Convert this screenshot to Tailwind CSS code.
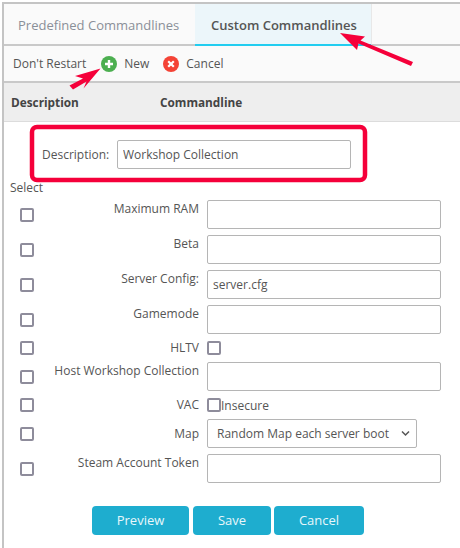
<!DOCTYPE html>
<html lang="en">

<head>
  <meta charset="UTF-8" />
  <title>Custom Commandlines</title>
  <script src="https://cdn.jsdelivr.net/npm/@tailwindcss/browser@4"></script>
</head>

<body class="bg-white">
  <div class="relative w-[460px] h-[548px] overflow-hidden pt-[2px] pl-[2px] font-['Open_Sans',sans-serif] text-[12px] text-[#555]">
    <div class="h-[546px] border-l-2 border-t-2 border-[#c4c4c4] bg-white">
      <!-- tabs -->
      <div class="flex h-[42px] bg-[#fafafa] border-b-2 border-[#c9c9c9]">
        <div class="w-[191px] pl-[14px] pt-[12px] text-[13px] leading-[18px] text-[#8a8f98]">Predefined Commandlines</div>
        <div class="w-[177px] -mb-[2px] h-[42px] bg-[#ecf6fa] border-b-2 border-[#22cdf0] border-r border-r-[#e8e8e8] pl-[16px] pt-[12px] text-[13px] leading-[18px] font-semibold whitespace-nowrap text-[#555]">Custom Commandlines</div>
      </div>
      <!-- toolbar -->
      <div class="flex items-center h-[37px] bg-[#fafafa] border-b-2 border-[#c9c9c9] pl-[9px] pt-[1px]">
        <span>Don't Restart</span>
        <svg class="ml-[15px] w-4 h-4 shrink-0" viewBox="0 0 16 16">
          <circle cx="8" cy="8" r="8" fill="#4caf50" />
          <path d="M8 4v8M4 8h8" stroke="#fff" stroke-width="2.4" />
        </svg>
        <span class="ml-[7px] w-[24px]">New</span>
        <svg class="ml-[15px] w-4 h-4 shrink-0" viewBox="0 0 16 16">
          <circle cx="8" cy="8" r="8" fill="#f44336" />
          <path d="M5.2 5.2l5.6 5.6M10.8 5.2l-5.6 5.6" stroke="#fff" stroke-width="2.2" />
        </svg>
        <span class="ml-[7px]">Cancel</span>
      </div>
      <!-- table header -->
      <div class="flex items-center h-[39px] bg-[#eeeeee] border-b border-[#dcdcdc] pl-[7px] pt-px text-[11.8px] font-bold text-[#444]">
        <span class="w-[149px]">Description</span>
        <span>Commandline</span>
      </div>
      <!-- description -->
      <div class="flex items-center h-[29px] mt-[18px] pl-[38px]">
        <label class="w-[75px]">Description:</label>
        <input class="w-[234px] h-[29px] px-[5px] border border-[#b5b5b5] rounded-[2px] bg-white text-[#555] outline-none" value="Workshop Collection" />
      </div>
      <div class="mt-[10px] pl-[6px] leading-[17px]">Select</div>
      <!-- options -->
      <div class="flex flex-col">
        <div class="flex h-[29px] mt-[4px] items-center">
          <span class="ml-[16px] w-[14px] h-[14px] mt-[1px] border-2 border-[#8e8c9b] rounded-[2px]"></span>
          <label class="w-[165px] self-start leading-[17px] text-right">Maximum RAM</label>
          <input class="ml-[8px] w-[234px] h-[29px] px-[5px] border border-[#b5b5b5] rounded-[2px]" />
        </div>
        <div class="flex h-[29px] mt-[6px] items-center">
          <span class="ml-[16px] w-[14px] h-[14px] mt-[1px] border-2 border-[#8e8c9b] rounded-[2px]"></span>
          <label class="w-[165px] self-start leading-[17px] text-right">Beta</label>
          <input class="ml-[8px] w-[234px] h-[29px] px-[5px] border border-[#b5b5b5] rounded-[2px]" />
        </div>
        <div class="flex h-[29px] mt-[6px] items-center">
          <span class="ml-[16px] w-[14px] h-[14px] mt-[1px] border-2 border-[#8e8c9b] rounded-[2px]"></span>
          <label class="w-[165px] self-start leading-[17px] text-right">Server Config:</label>
          <input class="ml-[8px] w-[234px] h-[29px] px-[5px] border border-[#b5b5b5] rounded-[2px] text-[#555]" value="server.cfg" />
        </div>
        <div class="flex h-[29px] mt-[6px] items-center">
          <span class="ml-[16px] w-[14px] h-[14px] mt-[1px] border-2 border-[#8e8c9b] rounded-[2px]"></span>
          <label class="w-[165px] self-start leading-[17px] text-right">Gamemode</label>
          <input class="ml-[8px] w-[234px] h-[29px] px-[5px] border border-[#b5b5b5] rounded-[2px]" />
        </div>
        <div class="flex h-[28px] items-center">
          <span class="ml-[16px] w-[14px] h-[14px] border-2 border-[#8e8c9b] rounded-[2px]"></span>
          <label class="w-[165px] text-right">HLTV</label>
          <span class="ml-[8px] w-[14px] h-[14px] border-2 border-[#8e8c9b] rounded-[2px]"></span>
        </div>
        <div class="flex h-[29px] items-center">
          <span class="ml-[16px] w-[14px] h-[14px] mt-[1px] border-2 border-[#8e8c9b] rounded-[2px]"></span>
          <label class="w-[165px] self-start leading-[17px] text-right">Host Workshop Collection</label>
          <input class="ml-[8px] w-[234px] h-[29px] px-[5px] border border-[#b5b5b5] rounded-[2px]" />
        </div>
        <div class="flex h-[28px] items-center">
          <span class="ml-[16px] w-[14px] h-[14px] border-2 border-[#8e8c9b] rounded-[2px]"></span>
          <label class="w-[165px] text-right">VAC</label>
          <span class="ml-[8px] w-[14px] h-[14px] border-2 border-[#8e8c9b] rounded-[2px]"></span>
          <span class="pt-[1px]">Insecure</span>
        </div>
        <div class="flex h-[29px] items-center">
          <span class="ml-[16px] w-[14px] h-[14px] border-2 border-[#8e8c9b] rounded-[2px]"></span>
          <label class="w-[165px] text-right">Map</label>
          <div class="relative ml-[8px] w-[210px] h-[29px] flex items-center pl-[9px] border border-[#b5b5b5] rounded-[2px]">
            <span>Random Map each server boot</span>
            <svg class="absolute right-[6px] top-[10px] w-[9px] h-[7px]" viewBox="0 0 9 7" fill="none">
              <path d="M1 1.5l3.5 3.5 3.5-3.5" stroke="#555" stroke-width="1.5" />
            </svg>
          </div>
        </div>
        <div class="flex h-[29px] mt-[6px] items-center">
          <span class="ml-[16px] w-[14px] h-[14px] mt-[1px] border-2 border-[#8e8c9b] rounded-[2px]"></span>
          <label class="w-[165px] self-start leading-[17px] text-right">Steam Account Token</label>
          <input class="ml-[8px] w-[234px] h-[29px] px-[5px] border border-[#b5b5b5] rounded-[2px]" />
        </div>
      </div>
      <!-- buttons -->
      <div class="flex mt-[23px] ml-[88px] text-[13px] text-[#e8f7fb]">
        <button class="w-[97px] h-[29px] pt-[1px] bg-[#1eadcf] rounded-[4px]">Preview</button>
        <button class="ml-[4px] w-[78px] h-[29px] pt-[1px] bg-[#1eadcf] rounded-[4px]">Save</button>
        <button class="ml-[3px] w-[90px] h-[29px] pt-[1px] bg-[#1eadcf] rounded-[4px]">Cancel</button>
      </div>
    </div>

    <!-- annotations drawn over the screenshot -->
    <svg class="absolute left-0 top-0 pointer-events-none" width="460" height="548" viewBox="0 0 460 548" fill="none">
      <rect x="32" y="127" width="333" height="53" rx="5" stroke="#f5003a" stroke-width="4.5" />
      <path d="M100.500 68.500L75 76L83 78.500L69.500 85.500L73 89.500L86.500 81.500L83.500 88.500Z" fill="#f5003a" />
      <path d="M340 33L357 50L358.500 43.500L411 66L413 62L360.500 40.500L365 36.500Z" fill="#f5003a" />
    </svg>
  </div>
</body>

</html>
